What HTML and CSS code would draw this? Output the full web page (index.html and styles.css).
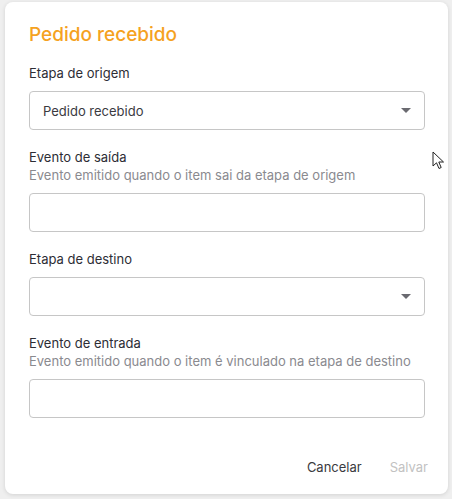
FILE: index.html
```html
<!DOCTYPE html>
<html lang="pt-BR">
<head>
  <meta charset="UTF-8">
  <meta name="viewport" content="width=device-width, initial-scale=1.0">
  <title>Pedido recebido</title>
  <link rel="stylesheet" href="styles.css">
</head>
<body>
  <div class="dialog">
    <h2 class="dialog-title">Pedido recebido</h2>

    <div class="field">
      <div class="field-label">Etapa de origem</div>
      <div class="select">
        <span>Pedido recebido</span>
        <span class="select-arrow"></span>
      </div>
    </div>

    <div class="field">
      <div class="field-label">Evento de saída</div>
      <div class="field-help">Evento emitido quando o item sai da etapa de origem</div>
      <div class="input"></div>
    </div>

    <div class="field">
      <div class="field-label">Etapa de destino</div>
      <div class="select">
        <span></span>
        <span class="select-arrow"></span>
      </div>
    </div>

    <div class="field">
      <div class="field-label">Evento de entrada</div>
      <div class="field-help">Evento emitido quando o item é vinculado na etapa de destino</div>
      <div class="input"></div>
    </div>

    <div class="actions">
      <button class="btn">Cancelar</button>
      <button class="btn btn-disabled">Salvar</button>
    </div>
  </div>

  <svg class="cursor" width="14" height="20" viewBox="0 0 14 20">
    <path d="M1 1 L1 15 L4.5 11.8 L7 17.5 L9.2 16.5 L6.8 11 L11.5 11 Z" fill="#fff" stroke="#222" stroke-width="1" stroke-linejoin="round"/>
  </svg>
</body>
</html>
```

FILE: styles.css
```css
body {
  margin: 0;
  background-color: #efefef;
  font-family: Inter, "Noto Sans", sans-serif;
  color: #2d2d35;
  position: relative;
  height: 499px;
  overflow: hidden;
}
.dialog {
  margin: 2px 0 0 5px;
  width: 443px;
  height: 492px;
  box-sizing: border-box;
  background-color: #fff;
  border-radius: 8px;
  box-shadow: 0 1px 4px rgba(0, 0, 0, 0.12);
  padding: 21px 23px 0 24px;
  display: flex;
  flex-direction: column;
}
.dialog-title {
  margin: 0 0 17px;
  font-size: 19px;
  line-height: 24px;
  font-weight: 500;
  color: #f5a21f;
}
.field {
  margin-bottom: 18px;
}
.field-label {
  font-size: 13px;
  line-height: 18px;
  color: #2d2d35;
}
.field-help {
  font-size: 13px;
  line-height: 18px;
  color: #8a8a8f;
}
.select,
.input {
  margin-top: 9px;
  height: 39px;
  box-sizing: border-box;
  border: 1px solid #c6c6c6;
  border-radius: 4px;
}
.select {
  display: flex;
  align-items: center;
  justify-content: space-between;
  padding: 0 13px 0 13px;
  font-size: 13px;
  color: #3a3a3f;
}
.select-arrow {
  width: 0;
  height: 0;
  border-left: 5px solid transparent;
  border-right: 5px solid transparent;
  border-top: 5px solid #6a6a70;
}
.actions {
  margin: 22px -3px 0 0;
  display: flex;
  justify-content: flex-end;
  gap: 28px;
}
.btn {
  background: none;
  border: none;
  padding: 0;
  font-family: Inter, "Noto Sans", sans-serif;
  font-size: 13px;
  line-height: 18px;
  color: #3a3a40;
}
.btn-disabled {
  color: #c2c2c2;
}
.cursor {
  position: absolute;
  left: 432px;
  top: 151px;
}
```
